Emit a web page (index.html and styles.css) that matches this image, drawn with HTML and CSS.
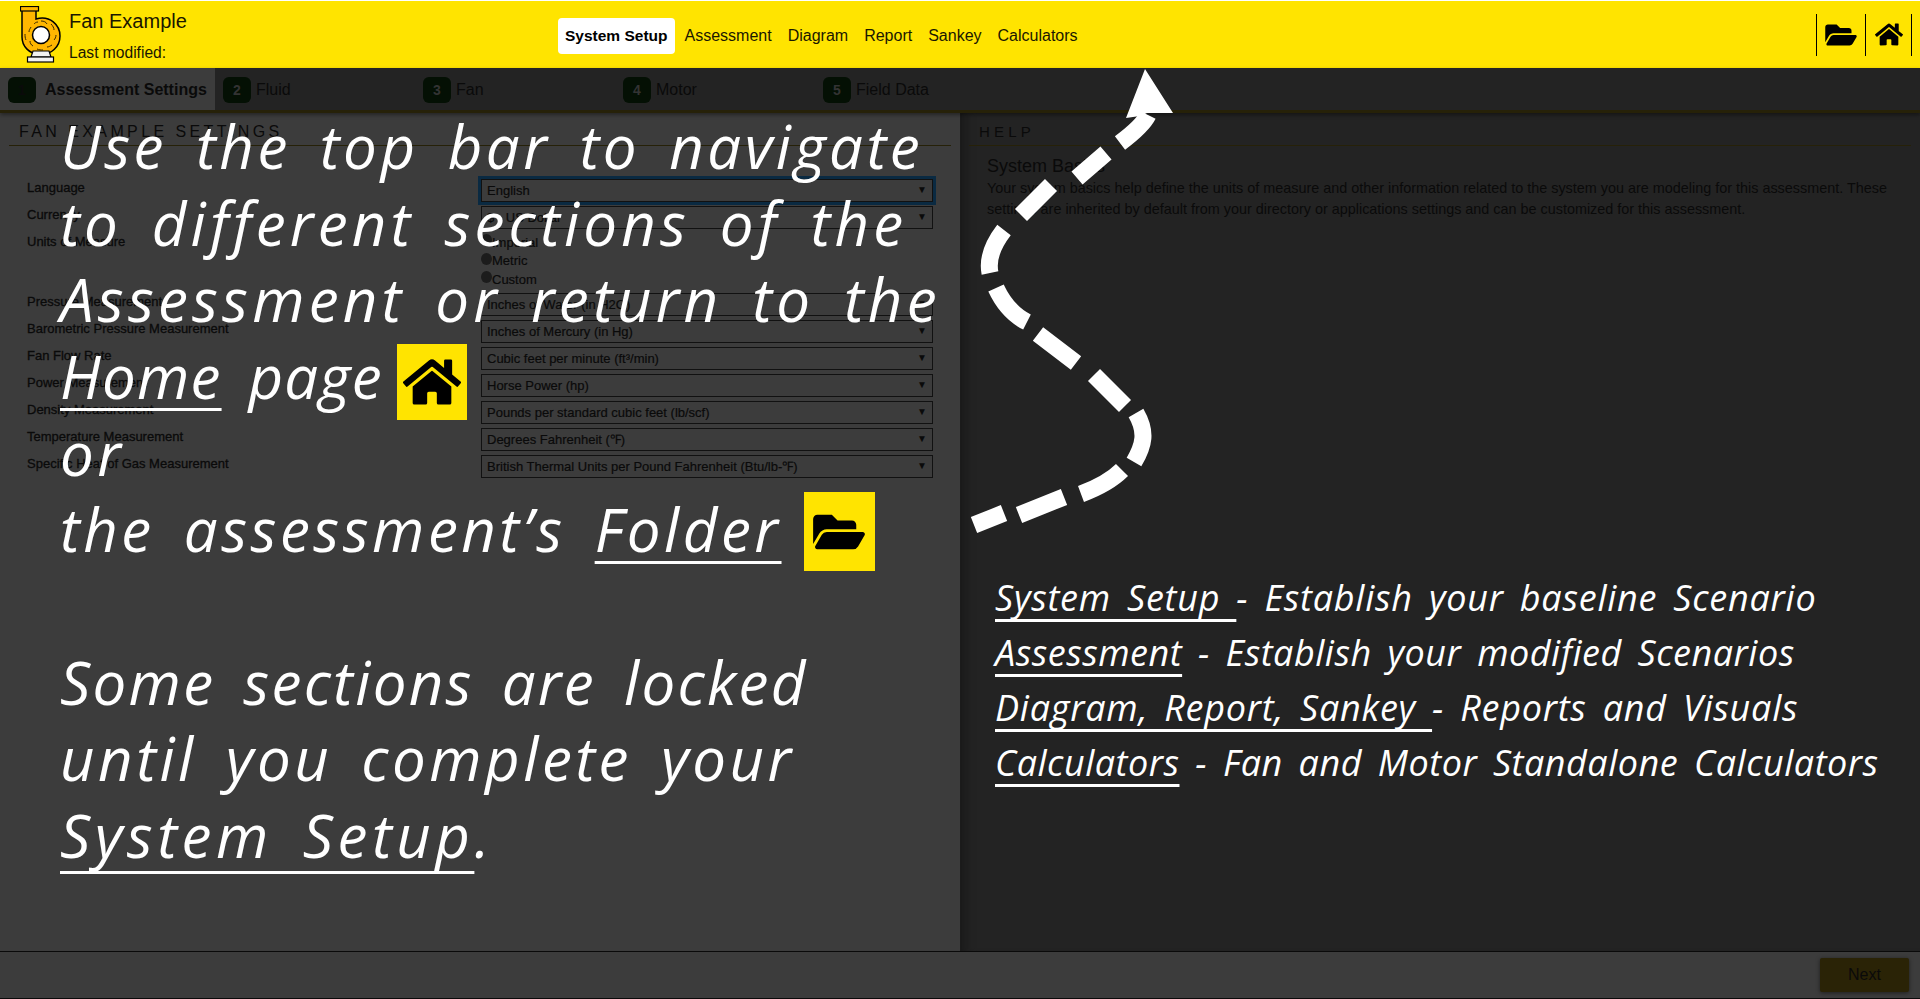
FILE: index.html
```html
<!DOCTYPE html>
<html lang="en">
<head>
    <meta charset="UTF-8">
    <meta name="viewport" content="width=device-width, initial-scale=1.0">
    <title>Fan Example</title>
    <link rel="stylesheet" href="styles.css">
</head>
<body>

    <svg class="icon-defs" width="0" height="0">
        <symbol id="iconFolder" viewBox="0 0 576 512">
            <path d="M572.694 292.093L500.27 416.248A63.997 63.997 0 0 1 444.989 448H45.025c-18.523 0-30.064-20.093-20.731-36.093l72.424-124.155A64 64 0 0 1 152 256h399.964c18.523 0 30.064 20.093 20.73 36.093zM152 224h328v-48c0-26.51-21.49-48-48-48H272l-64-64H48C21.49 64 0 85.49 0 112v278.046l69.077-118.418C86.214 242.25 117.989 224 152 224z"/>
        </symbol>
        <symbol id="iconHome" viewBox="0 0 576 512">
            <path d="M280.37 148.26L96 300.11V464a16 16 0 0 0 16 16l112.06-.29a16 16 0 0 0 15.92-16V368a16 16 0 0 1 16-16h64a16 16 0 0 1 16 16v95.64a16 16 0 0 0 16 16.05L464 480a16 16 0 0 0 16-16V300L295.67 148.26a12.19 12.19 0 0 0-15.3 0zM571.6 251.47L488 182.56V44.05a12 12 0 0 0-12-12h-56a12 12 0 0 0-12 12v72.61L318.47 43a48 48 0 0 0-61 0L4.34 251.47a12 12 0 0 0-1.6 16.9l25.5 31A12 12 0 0 0 45.15 301l235.22-193.74a12.19 12.19 0 0 1 15.3 0L530.9 301a12 12 0 0 0 16.9-1.6l25.5-31a12 12 0 0 0-1.7-16.93z"/>
        </symbol>
    </svg>

    <header class="top-bar">
        <svg class="logo" viewBox="20 7 42 57">
            <path class="logo-body" d="M22 11h14v9c14-4 24 6 24 17 0 12-10 18-17 18h-4c-10 0-17-8-17-17z"/>
            <path class="logo-base" d="M33 52h16l2 6H31z"/>
            <rect class="logo-base" x="27.5" y="58" width="26" height="5"/>
            <rect class="logo-flange" x="20.5" y="7.5" width="18" height="4.5"/>
            <path class="logo-blades" d="M41 22c3 0 5 1 6 3M51 25c2 2 3 4 3 6M56 36c0 2-1 4-2 5M52 46c-2 1-3 2-5 2M43 51c-2 0-4 0-6-1M33 47c-2-1-3-3-3-5M26 41c-1-2-1-4-1-6M29 33c0-2 1-3 2-5M34 25c1-1 2-2 4-2"/>
            <circle class="logo-hub" cx="41" cy="36" r="8.5"/>
        </svg>
        <div class="assessment-info">
            <div class="assessment-name">Fan Example</div>
            <div class="assessment-date">Last modified:</div>
        </div>
        <nav class="main-nav">
            <a class="active">System Setup</a>
            <a>Assessment</a>
            <a>Diagram</a>
            <a>Report</a>
            <a>Sankey</a>
            <a>Calculators</a>
        </nav>
        <div class="top-actions">
            <a class="folder-link"><svg class="folder-icon"><use href="#iconFolder"/></svg></a>
            <a class="home-link"><svg class="home-icon"><use href="#iconHome"/></svg></a>
        </div>
    </header>

    <div class="tabs">
        <div class="tab first active"><span class="badge">1</span>Assessment Settings</div>
        <div class="tab"><span class="badge">2</span>Fluid</div>
        <div class="tab"><span class="badge">3</span>Fan</div>
        <div class="tab"><span class="badge">4</span>Motor</div>
        <div class="tab"><span class="badge">5</span>Field Data</div>
    </div>

    <main class="content">
        <section class="settings">
            <h2 class="section-title">FAN EXAMPLE SETTINGS</h2>
            <form class="settings-form">
                <label>Language</label>
                <div class="select-wrap focused"><select><option>English</option></select></div>
                <label>Currency</label>
                <div class="select-wrap"><select><option>$ - US Dollar</option></select></div>
                <label>Units of Measure</label>
                <div class="radio-list">
                    <div class="radio-item"><span class="radio"></span>Imperial</div>
                    <div class="radio-item"><span class="radio"></span>Metric</div>
                    <div class="radio-item"><span class="radio"></span>Custom</div>
                </div>
                <label>Pressure Measurement</label>
                <div class="select-wrap"><select><option>Inches of Water (in H2O)</option></select></div>
                <label>Barometric Pressure Measurement</label>
                <div class="select-wrap"><select><option>Inches of Mercury (in Hg)</option></select></div>
                <label>Fan Flow Rate</label>
                <div class="select-wrap"><select><option>Cubic feet per minute (ft³/min)</option></select></div>
                <label>Power Measurement</label>
                <div class="select-wrap"><select><option>Horse Power (hp)</option></select></div>
                <label>Density Measurement</label>
                <div class="select-wrap"><select><option>Pounds per standard cubic feet (lb/scf)</option></select></div>
                <label>Temperature Measurement</label>
                <div class="select-wrap"><select><option>Degrees Fahrenheit (℉)</option></select></div>
                <label>Specific Heat of Gas Measurement</label>
                <div class="select-wrap"><select><option>British Thermal Units per Pound Fahrenheit (Btu/lb-℉)</option></select></div>
            </form>
        </section>
        <section class="help">
            <h2 class="section-title">HELP</h2>
            <div class="help-body">
                <h3>System Basics</h3>
                <p>Your system basics help define the units of measure and other information related to the system you are modeling for this assessment. These settings are inherited by default from your directory or applications settings and can be customized for this assessment.</p>
            </div>
        </section>
    </main>

    <footer class="bottom-bar">
        <button class="next-btn">Next</button>
    </footer>

    <!-- Walkthrough notes on top of the dimmed page -->
    <div class="guide guide-left">
        <p>Use the top bar to navigate</p>
        <p class="wide">to different sections of the</p>
        <p class="wide">Assessment or return to the</p>
        <p class="tight"><u class="hang">Home</u> page<span class="guide-icon home-box"><svg class="guide-home"><use href="#iconHome"/></svg></span></p>
        <p>or</p>
        <p>the assessment’s <u>Folder</u><span class="guide-icon folder-box"><svg class="guide-folder"><use href="#iconFolder"/></svg></span></p>
        <p class="blank"></p>
        <p class="snug">Some sections are locked</p>
        <p>until you complete your</p>
        <p class="wider"><u class="hang setup-word">System Setup</u>.</p>
    </div>

    <div class="guide guide-right">
        <p class="wide"><u>System Setup </u>- Establish your baseline Scenario</p>
        <p><u>Assessment</u> - Establish your modified Scenarios</p>
        <p class="wide"><u>Diagram, Report, Sankey </u>- Reports and Visuals</p>
        <p><u>Calculators</u> - Fan and Motor Standalone Calculators</p>
    </div>

    <svg class="guide-arrow" viewBox="0 0 1920 999">
        <path class="arrow-dashes" d="M974 525L1004 513M1019 515L1064 497M1081 494C1097 488 1111 481 1122 470M1134 462C1144 445 1147 432 1136 413M1094 375L1125 406M1038 334L1076 363M996 288C1003 303 1013 315 1027 322M990 273C987 258 994 243 1004 230M1021 215L1051 185M1077 178L1106 153M1120 143C1132 134 1143 125 1148 115"/>
        <path class="arrow-head" d="M1145 69L1126 118L1140 116L1147 113L1173 113z"/>
    </svg>

</body>
</html>
```

FILE: styles.css
```css
* {
    box-sizing: border-box;
}

body {
    font-family: "Liberation Sans", Arial, sans-serif;
    background-color: #232323;
    color: #0a0a0a;
    margin: 0;
    height: 100vh;
    overflow: hidden;
    display: flex;
    flex-direction: column;
    position: relative;
}

.icon-defs {
    position: absolute;
}

/* Top bar */
.top-bar {
    height: 68px;
    flex-shrink: 0;
    display: flex;
    align-items: center;
    background-color: #ffe400;
    border-top: 1px solid #fff;
    color: #1a1700;
}

.logo {
    width: 42px;
    height: 57px;
    margin-left: 20px;
}

.logo-body {
    fill: #ffb600;
    stroke: #000;
    stroke-width: 1.5;
}

.logo-base {
    fill: #f2f2f2;
    stroke: #000;
    stroke-width: 1.2;
}

.logo-flange {
    fill: #ffb600;
    stroke: #000;
    stroke-width: 1.2;
}

.logo-blades {
    fill: none;
    stroke: #3a2a00;
    stroke-width: 1;
}

.logo-hub {
    fill: #fff;
    stroke: #000;
    stroke-width: 1.5;
}

.assessment-info {
    width: 489px;
    margin-left: 7px;
    padding-top: 2px;
}

.assessment-name {
    font-size: 20px;
}

.assessment-date {
    font-size: 15.6px;
    margin-top: 11px;
}

.main-nav {
    display: flex;
    align-items: center;
    font-size: 16px;
    margin-top: 2px;
}

.main-nav a {
    padding: 9px 8px;
    line-height: 18px;
}

.main-nav a.active {
    background-color: #fff;
    color: #000;
    font-weight: bold;
    font-size: 15.5px;
    border-radius: 4px;
    padding: 9px 7px;
    margin-right: 2px;
}

.top-actions {
    display: flex;
    align-items: center;
    margin-left: auto;
    margin-right: 8px;
}

.top-actions a {
    height: 42px;
    display: flex;
    align-items: center;
    justify-content: center;
    border-left: 1px solid #000;
}

.folder-link {
    width: 49px;
}

.home-link {
    width: 47px;
    border-right: 1px solid #000;
}

.folder-icon {
    width: 32px;
    height: 28px;
}

.home-icon {
    width: 28px;
    height: 25px;
}

/* Step tabs */
.tabs {
    height: 45px;
    flex-shrink: 0;
    display: flex;
    background-color: #232323;
    border-bottom: 3px solid #262108;
    font-size: 16px;
    box-shadow: 0 2px 4px rgba(0, 0, 0, 0.4);
    position: relative;
}

.tab {
    width: 200px;
    display: flex;
    align-items: center;
    gap: 5px;
    padding-left: 8px;
    padding-top: 2px;
}

.tab.first {
    width: 215px;
    gap: 9px;
}

.tab.active {
    background-color: #3c3c3c;
    font-weight: bold;
}

.badge {
    width: 28px;
    height: 26px;
    border-radius: 6px;
    background-color: #041004;
    color: #333;
    font-size: 14px;
    font-weight: bold;
    display: flex;
    align-items: center;
    justify-content: center;
}

.tab.active .badge {
    color: #0a0a0a;
}

/* Main panels */
.content {
    flex: 1;
    display: flex;
    min-height: 0;
}

.settings {
    width: 960px;
    background-color: #3c3c3c;
    padding: 9px 9px 0;
}

.help {
    flex: 1;
    padding: 9px 9px 0;
    box-shadow: inset 14px 0 10px -8px #1a1a1a;
}

.section-title {
    margin: 0;
    height: 24px;
    padding-left: 10px;
    font-size: 16px;
    font-weight: normal;
    line-height: 20px;
    letter-spacing: 3.4px;
    border-bottom: 1px solid #262108;
}

.settings-form {
    display: grid;
    grid-template-columns: 454px 452px;
    row-gap: 4px;
    padding: 25px 0 0 18px;
    margin-top: 8px;
    font-size: 13px;
}

.settings-form label {
    line-height: 18px;
    -webkit-text-stroke: 0.3px #0a0a0a;
}

.select-wrap {
    position: relative;
    height: 23px;
    border: 1px solid #111;
}

.select-wrap.focused {
    outline: 3px solid #0a2a42;
}

.select-wrap::after {
    content: "▼";
    position: absolute;
    top: 4px;
    right: 5px;
    font-size: 10px;
    color: #0a0a0a;
}

.select-wrap select {
    width: 100%;
    height: 100%;
    appearance: none;
    border: none;
    background: none;
    font-family: "Liberation Sans", Arial, sans-serif;
    font-size: 13px;
    color: #0a0a0a;
    -webkit-text-stroke: 0.2px #0a0a0a;
    padding: 0 5px;
}

.radio-list {
    height: 56px;
}

.radio-item {
    height: 18.5px;
    display: flex;
    align-items: center;
    font-size: 13px;
    -webkit-text-stroke: 0.2px #0a0a0a;
}

.radio {
    width: 11px;
    height: 12px;
    margin-top: -4px;
    border-radius: 50%;
    background-color: #1c1c1c;
}

.help .section-title {
    font-size: 15px;
    letter-spacing: 4.2px;
}

.help-body {
    padding: 0 18px;
}

.help-body h3 {
    margin: 8px 0 0;
    font-size: 18px;
    font-weight: normal;
    line-height: 24px;
}

.help-body p {
    margin: 0;
    font-size: 14.4px;
    line-height: 21px;
}

/* Footer */
.bottom-bar {
    height: 48px;
    flex-shrink: 0;
    display: flex;
    align-items: center;
    justify-content: flex-end;
    padding-right: 11px;
    background-color: #3c3c3c;
    border-top: 1px solid #0a0a0a;
    border-bottom: 1px solid #0a0a0a;
}

.next-btn {
    width: 89px;
    height: 34px;
    border: none;
    border-radius: 2px;
    background-color: #2a2306;
    color: #0a0a0a;
    font-family: "Liberation Sans", Arial, sans-serif;
    font-size: 16px;
    box-shadow: 0 1px 4px rgba(0, 0, 0, 0.5);
}

/* Walkthrough overlay */
.guide {
    position: absolute;
    color: #fff;
    font-family: "Open Sans", sans-serif;
    font-style: italic;
}

.guide p {
    margin: 0;
    display: flex;
    align-items: center;
    white-space: pre-wrap;
}

.guide u {
    text-decoration-thickness: 3px;
    text-decoration-skip-ink: none;
    text-underline-offset: 9px;
}

.guide-left {
    left: 60px;
    top: 108px;
    font-size: 60px;
    font-weight: 500;
    letter-spacing: 3.5px;
    word-spacing: 10px;
}

.guide-left p {
    height: 76.6px;
}

.guide-left p.blank {
    height: 76px;
}

/* the note's lines don't all run the same width */
.guide-left p.wide {
    letter-spacing: 4.2px;
}

.guide-left p.wider {
    letter-spacing: 4.5px;
}

.guide-left p.snug {
    letter-spacing: 2.3px;
}

.guide-left p.tight {
    letter-spacing: 1.2px;
}

.guide u.hang {
    margin-left: -6px;
    padding-left: 6px;
}

.guide u.setup-word {
    text-underline-offset: 13px;
}

.guide-icon {
    display: flex;
    align-items: center;
    justify-content: center;
    background-color: #ffe400;
    color: #000;
}

.home-box {
    width: 70px;
    height: 76px;
    margin-left: 14px;
    margin-top: 12px;
}

.folder-box {
    width: 71px;
    height: 79px;
    margin-left: 22px;
    margin-top: 5px;
}

.guide-home {
    width: 58px;
    height: 52px;
}

.guide-folder {
    width: 52px;
    height: 46px;
}

.guide-right {
    left: 995px;
    top: 570px;
    font-size: 36px;
    word-spacing: 6px;
    letter-spacing: 0.5px;
}

.guide-right p {
    height: 55px;
}

.guide-right p.wide {
    letter-spacing: 0.75px;
}

.guide-right u {
    text-underline-offset: 8px;
}

.guide-arrow {
    position: absolute;
    left: 0;
    top: 0;
    width: 1920px;
    height: 999px;
    pointer-events: none;
}

.arrow-dashes {
    fill: none;
    stroke: #fff;
    stroke-width: 17;
}

.arrow-head {
    fill: #fff;
}
```
